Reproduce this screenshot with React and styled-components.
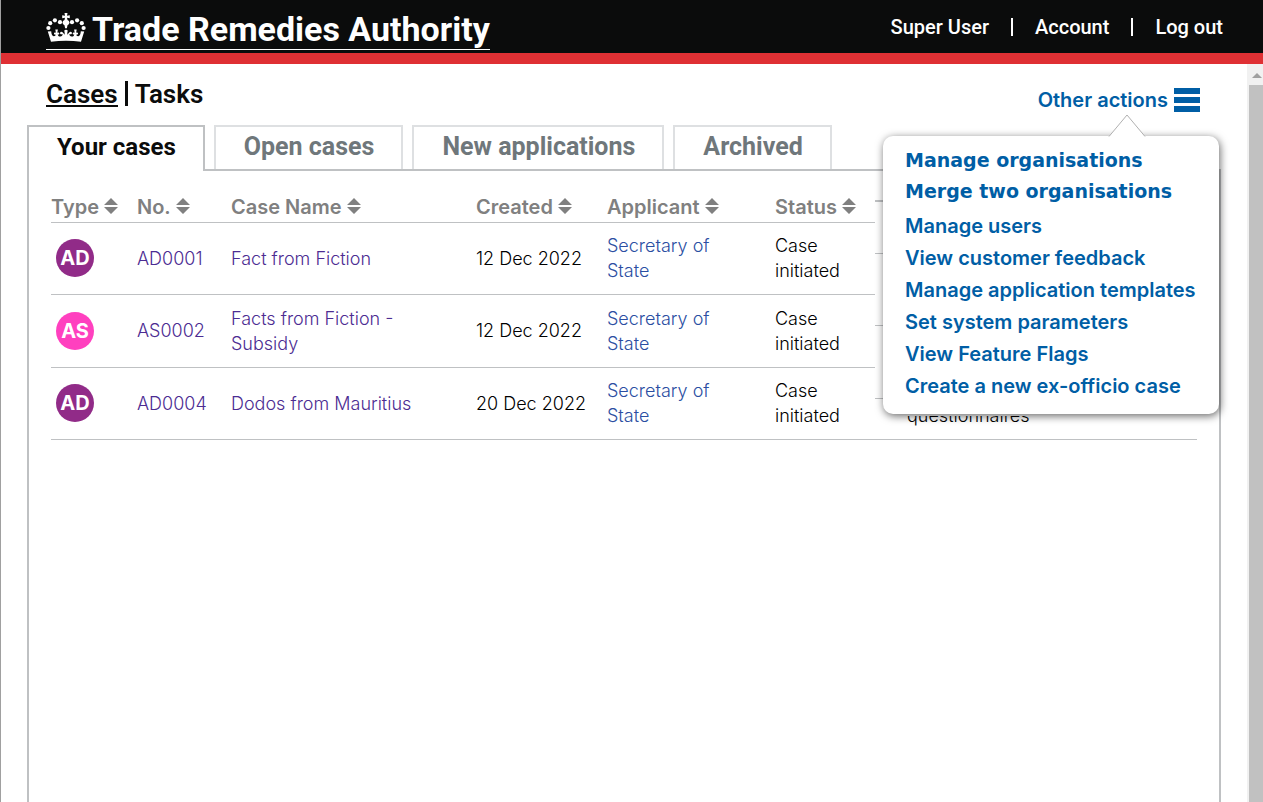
import React from "react";
import styled, { createGlobalStyle } from "styled-components";

const GlobalStyle = createGlobalStyle`
  * { box-sizing: border-box; }
  body { margin: 0; background: #fff; color: #000; font: 300 18px/25px Inter, "Liberation Sans", sans-serif; }
  a { text-decoration: none; }
`;

const Page = styled.div`
  display: flex;
  flex-direction: column;
  height: 100vh;
  overflow: hidden;
  border-left: 1px solid #a0a0a0;
`;
const Header = styled.header`
  display: flex;
  justify-content: space-between;
  align-items: flex-start;
  flex: none;
  height: 64px;
  padding: 10px 40px 0 45px;
  background: #0b0c0c;
  border-bottom: 11px solid #df3034;
  color: #fff;
`;
const Brand = styled.a`
  display: flex;
  align-items: flex-start;
  gap: 6px;
  height: 40px;
  border-bottom: 1px solid #fff;
  color: #fff;
  font: 700 34px/38px Roboto, sans-serif;
  svg { flex: none; margin-top: 3px; }
`;
const UserNav = styled.nav`
  display: flex;
  align-items: center;
  gap: 22px;
  height: 34px;
  color: #fff;
  a { color: #fff; font: 500 20px/24px Roboto, sans-serif; }
`;
const Divider = styled.span`
  width: 2px;
  height: 18px;
  background: currentColor;
`;
const Body = styled.div`
  display: flex;
  flex: 1;
  min-height: 0;
`;
const Main = styled.main`
  display: flex;
  flex-direction: column;
  flex: 1;
  min-width: 0;
  padding: 14px 26px 0 26px;
`;
const ScrollBar = styled.div`
  flex: none;
  width: 16px;
  background: #f1f1f1;
  display: flex;
  flex-direction: column;
  padding: 9px 0 0 2px;
  svg { display: block; margin: 0 0 7px 3px; flex: none; }
`;
const Thumb = styled.div`
  flex: 1;
  background: #c1c1c1;
`;
const TopRow = styled.div`
  display: flex;
  justify-content: space-between;
  height: 47px;
  padding: 0 21px 0 19px;
`;
const Switch = styled.h1`
  display: flex;
  align-items: flex-start;
  gap: 7px;
  margin: 0;
  padding-top: 3px;
  font: 600 26px/26px Roboto, sans-serif;
`;
const SwitchLink = styled.a`
  height: 26px;
  color: #0b0c0c;
  border-bottom: ${(p) => (p.$current ? "2px solid #0b0c0c" : "0")};
`;
const SwitchBar = styled.span`
  width: 3px;
  height: 25px;
  background: #0b0c0c;
`;
const Actions = styled.div`
  position: relative;
`;
const ActionsButton = styled.button`
  display: flex;
  align-items: center;
  gap: 6px;
  height: 44px;
  padding: 0;
  border: 0;
  background: none;
  color: #005ea5;
  font: 600 20px/24px Inter, sans-serif;
`;
const Menu = styled.ul`
  position: absolute;
  z-index: 2;
  top: 58px;
  right: -19px;
  width: 336px;
  margin: 0;
  padding: 9px 22px 12px;
  list-style: none;
  background: #fff;
  border-radius: 10px;
  box-shadow: 1px 2px 8px rgba(0, 0, 0, 0.6);
`;
const Pointer = styled.li`
  position: absolute;
  top: -22px;
  right: 73px;
`;
const MenuItem = styled.li`
  height: ${(p) => (p.$wide ? 31 : 32)}px;
  white-space: nowrap;
  a {
    color: #005ea5;
    font: ${(p) => (p.$wide ? '700 19px/31px "DejaVu Sans", sans-serif' : "600 20px/32px Inter, sans-serif")};
  }
`;
const MenuGap = styled.li`
  height: 3px;
`;
const Underlay = styled.div`
  position: absolute;
  z-index: 1;
  top: 94px;
  right: -18px;
  width: 343px;
  height: 244px;
  background: #fff;
`;
const Stub = styled.span`
  position: absolute;
  left: 0;
  top: ${(p) => p.$top}px;
  width: 12px;
  height: ${(p) => p.$thick || 1}px;
  background: #bfc1c3;
`;
const Tabs = styled.div`
  display: flex;
  gap: 9px;
  height: 46px;
  border-bottom: 2px solid #bfc1c3;
`;
const Tab = styled.button`
  height: ${(p) => (p.$active ? 46 : 44)}px;
  flex: none;
  padding: 0 27px ${(p) => (p.$active ? 5 : 3)}px 28px;
  border: 2px solid ${(p) => (p.$active ? "#bfc1c3" : "#dee0e2")};
  border-bottom: 0;
  background: #fff;
  color: ${(p) => (p.$active ? "#0b0c0c" : "#6f777b")};
  font: 700 ${(p) => (p.$active ? 24 : 25)}px/28px Roboto, sans-serif;
`;
const Panel = styled.section`
  flex: 1;
  padding: 22px 22px 0;
  border: solid #bfc1c3;
  border-width: 0 2px;
`;
const Table = styled.table`
  width: 100%;
  border-collapse: collapse;
  table-layout: fixed;
`;
const Th = styled.th`
  width: ${(p) => p.$w};
  height: 29px;
  padding: 0;
  text-align: left;
  vertical-align: top;
  border-bottom: 1px solid #bfc1c3;
`;
const SortButton = styled.button`
  display: flex;
  align-items: center;
  gap: 5px;
  padding: 0;
  border: 0;
  background: none;
  color: #808080;
  font: 600 20px/28px Inter, sans-serif;
  white-space: nowrap;
  svg { margin-top: -3px; }
`;
const Row = styled.tr`
  height: 72px;
  &:nth-child(even) { height: 73px; }
`;
const Td = styled.td`
  padding: 0;
  padding-right: ${(p) => p.$gap || 0}px;
  padding-left: ${(p) => p.$indent || 0}px;
  vertical-align: middle;
  border-bottom: 1px solid #bfc1c3;
  a { color: ${(p) => (p.$visited ? "#4c2c92" : "#2b4ea2")}; }
`;
const NextStep = styled(Td)`
  padding-bottom: 11px;
  vertical-align: bottom;
`;
const Badge = styled.span`
  display: flex;
  align-items: center;
  justify-content: center;
  width: 38px;
  height: 38px;
  border-radius: 50%;
  background: ${(p) => (p.$kind === "AS" ? "#ff40bf" : "#912b88")};
  color: #fff;
  font: 700 20px/24px Inter, sans-serif;
`;

const Crown = () => (
  <svg width="40" height="30" viewBox="0 0 40 30" fill="#fff" aria-hidden="true">
    <path d="M18.500 0h3l-.5 2.700 2.800-.5v3l-2.800-.5.5 2.300c1.200.4 1.900 1.400 1.900 2.500 0 1.400-1 2.200-1.900 2.700l-.6 3h-1.800l-.6-3c-.9-.5-1.900-1.300-1.900-2.700 0-1.100.7-2.100 1.900-2.500l.5-2.300-2.800.5v-3l2.800.5z" />
    <circle cx="14" cy="9.200" r="2.100" /><circle cx="8.900" cy="7.300" r="2.100" />
    <circle cx="4.200" cy="10.200" r="2.100" /><circle cx="2.400" cy="15" r="2.100" />
    <circle cx="26" cy="9.200" r="2.100" /><circle cx="31.100" cy="7.300" r="2.100" />
    <circle cx="35.800" cy="10.200" r="2.100" /><circle cx="37.600" cy="15" r="2.100" />
    <path d="M1.800 18.500l3.400-.3c.2 3 1 4.800 2.500 5 1.200.1 1.900-.6 2-1.600-1.400.3-2-.6-1.700-1.500.3-.8 1.200-.9 1.900-.3l-.6-3.300h2.600l-.6 3.300c.8-.6 1.800-.4 2 .4.200.9-.5 1.600-1.600 1.300.2 1.400 1.300 2.200 2.600 2 1.400-.2 2.400-1.200 2.300-2.600-1.500.9-2.700.1-2.500-1.200.2-1.200 1.800-1.400 2.700-.2l1.900 2.300-.1-3c-.8-.8-.3-2.100 1.400-2.100s2.200 1.300 1.400 2.100l-.1 3 1.900-2.300c.9-1.200 2.500-1 2.700.2.200 1.300-1 2.100-2.500 1.200-.1 1.400.9 2.400 2.300 2.600 1.300.2 2.400-.6 2.600-2-1.100.3-1.800-.4-1.600-1.300.2-.8 1.200-1 2-.4l-.6-3.300h2.600l-.6 3.300c.7-.6 1.600-.5 1.900.3.300.9-.3 1.800-1.700 1.500.1 1 .8 1.700 2 1.600 1.500-.2 2.300-2 2.500-5l3.400.3-3.200 10.300c-9.500-1.500-20.500-1.500-30 0z" />
  </svg>
);
const SortIcon = () => (
  <svg width="14" height="16" viewBox="0 0 14 16" fill="currentColor" aria-hidden="true">
    <path d="M7 0l7 7H0zM0 9h14l-7 7z" />
  </svg>
);
const Bars = () => (
  <svg width="26" height="24" viewBox="0 0 26 24" fill="currentColor" aria-hidden="true">
    <path d="M0 0h26v6H0zM0 9h26v6H0zM0 18h26v6H0z" />
  </svg>
);

const columns = [
  ["Type", "86px"], ["No.", "94px"], ["Case Name", "245px"], ["Created", "131px"],
  ["Applicant", "168px"], ["Status", "132px"], [null, "auto"],
];
const cases = [
  { kind: "AD", no: "AD0001", name: "Fact from Fiction", created: "12 Dec 2022" },
  { kind: "AS", no: "AS0002", name: "Facts from Fiction - Subsidy", created: "12 Dec 2022" },
  { kind: "AD", no: "AD0004", name: "Dodos from Mauritius", created: "20 Dec 2022", next: "questionnaires" },
];
const tabs = ["Your cases", "Open cases", "New applications", "Archived"];
const wideMenu = ["Manage organisations", "Merge two organisations"];
const menu = [
  "Manage users", "View customer feedback", "Manage application templates",
  "Set system parameters", "View Feature Flags", "Create a new ex-officio case",
];

export default function App() {
  return (
    <Page>
      <GlobalStyle />
      <Header>
        <Brand href="#"><Crown />Trade Remedies Authority</Brand>
        <UserNav>
          <a href="#">Super User</a><Divider /><a href="#">Account</a><Divider /><a href="#">Log out</a>
        </UserNav>
      </Header>
      <Body>
        <Main>
          <TopRow>
            <Switch>
              <SwitchLink href="#" $current>Cases</SwitchLink><SwitchBar /><SwitchLink href="#">Tasks</SwitchLink>
            </Switch>
            <Actions>
              <ActionsButton type="button">Other actions<Bars /></ActionsButton>
              <Underlay>
                <Stub $top={28} $thick={2} /><Stub $top={81} /><Stub $top={153} /><Stub $top={226} />
              </Underlay>
              <Menu>
                {wideMenu.map((label) => <MenuItem key={label} $wide><a href="#">{label}</a></MenuItem>)}
                <MenuGap role="separator" />
                {menu.map((label) => <MenuItem key={label}><a href="#">{label}</a></MenuItem>)}
                <Pointer aria-hidden="true">
                  <svg width="38" height="23" viewBox="0 0 38 23" fill="#fff" stroke="#b0b0b0">
                    <path d="M1 22.500L19 1l18 21.500" />
                  </svg>
                </Pointer>
              </Menu>
            </Actions>
          </TopRow>
          <Tabs>
            {tabs.map((t, i) => <Tab key={t} type="button" $active={i === 0}>{t}</Tab>)}
          </Tabs>
          <Panel>
            <Table>
              <thead>
                <tr>
                  {columns.map(([label, w]) => (
                    <Th key={w} $w={w}>{label && <SortButton type="button">{label}<SortIcon /></SortButton>}</Th>
                  ))}
                </tr>
              </thead>
              <tbody>
                {cases.map((c) => (
                  <Row key={c.no}>
                    <Td $indent={5}><Badge $kind={c.kind}>{c.kind}</Badge></Td>
                    <Td $visited><a href="#">{c.no}</a></Td>
                    <Td $visited $gap={60}><a href="#">{c.name}</a></Td>
                    <Td>{c.created}</Td>
                    <Td $gap={50}><a href="#">Secretary of State</a></Td>
                    <Td $gap={50}>Case initiated</Td>
                    <NextStep>{c.next}</NextStep>
                  </Row>
                ))}
              </tbody>
            </Table>
          </Panel>
        </Main>
        <ScrollBar>
          <svg width="10" height="5" viewBox="0 0 10 5" fill="#a0a0a0"><path d="M5 0l5 5H0z" /></svg>
          <Thumb />
        </ScrollBar>
      </Body>
    </Page>
  );
}
